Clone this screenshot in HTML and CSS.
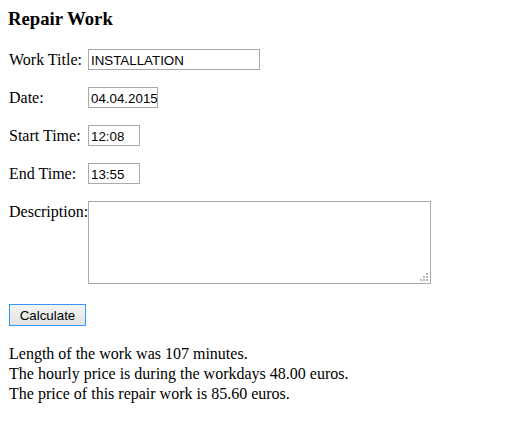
FILE: index.html
```html
<!DOCTYPE html>
<html>
<head>
<meta charset="utf-8">
<title>Repair Work</title>
<link rel="stylesheet" href="styles.css">
</head>
<body>
<h3 class="title">Repair Work</h3>
<form class="form">
  <div class="row">
    <label class="label" for="t">Work Title:</label>
    <input class="field field-title" id="t" type="text" value="INSTALLATION">
  </div>
  <div class="row">
    <label class="label" for="d">Date:</label>
    <input class="field field-date" id="d" type="text" value="04.04.2015">
  </div>
  <div class="row">
    <label class="label" for="s">Start Time:</label>
    <input class="field field-time" id="s" type="text" value="12:08">
  </div>
  <div class="row">
    <label class="label" for="e">End Time:</label>
    <input class="field field-time" id="e" type="text" value="13:55">
  </div>
  <div class="row row-desc">
    <label class="label" for="desc">Description:</label>
    <div class="area-wrap">
      <textarea class="area" id="desc"></textarea>
      <span class="grip"></span>
    </div>
  </div>
  <div class="actions">
    <button class="btn" type="button">Calculate</button>
  </div>
</form>
<div class="result">
  <div>Length of the work was 107 minutes.</div>
  <div>The hourly price is during the workdays 48.00 euros.</div>
  <div>The price of this repair work is 85.60 euros.</div>
</div>
</body>
</html>
```

FILE: styles.css
```css
html, body {
  margin: 0;
  padding: 0;
  background: #fff;
}
body {
  padding: 8px;
  font-family: "Liberation Serif", "Times New Roman", serif;
  font-size: 16px;
  color: #000;
}
.title {
  margin: 0;
  font-size: 18.72px;
  font-weight: bold;
  line-height: 22px;
}
.form {
  display: grid;
  grid-template-columns: 80px 1fr;
  row-gap: 17px;
  margin-top: 19px;
}
.row {
  display: contents;
}
.label {
  padding-left: 1px;
  align-self: center;
  line-height: 18px;
  white-space: nowrap;
}
.row-desc .label {
  align-self: start;
  padding-top: 2px;
}
.field {
  box-sizing: border-box;
  height: 21px;
  border: 1px solid #a9a9a9;
  padding: 2px 1px 1px 2px;
  margin: 0;
  font-family: "Liberation Sans", Arial, sans-serif;
  font-size: 13.33px;
  color: #000;
  background: #fff;
  justify-self: start;
  outline: none;
}
.field-title { width: 172px; }
.field-date { width: 70px; padding-right: 0; }
.field-time { width: 52px; }
.area-wrap {
  position: relative;
  width: 343px;
  height: 83px;
  justify-self: start;
}
.area {
  box-sizing: border-box;
  display: block;
  width: 343px;
  height: 83px;
  margin: 0;
  border: 1px solid #a9a9a9;
  padding: 2px;
  resize: none;
  outline: none;
  font-family: "Liberation Sans", Arial, sans-serif;
  font-size: 13.33px;
}
.grip {
  position: absolute;
  right: 3px;
  bottom: 3px;
  width: 2px;
  height: 2px;
  background: #b8b8b8;
  box-shadow: -3px 0 0 #b8b8b8, -6px 0 0 #b8b8b8, 0 -3px 0 #b8b8b8, -3px -3px 0 #b8b8b8, 0 -6px 0 #b8b8b8;
}
.actions {
  grid-column: 1 / 3;
  margin-top: 3px;
  padding-left: 1px;
}
.btn {
  box-sizing: border-box;
  width: 77px;
  height: 22px;
  margin: 0;
  padding: 0;
  border: 1px solid #3399ff;
  background: linear-gradient(#f4f4f4, #e3e3e3);
  font-family: "Liberation Sans", Arial, sans-serif;
  font-size: 13.33px;
  color: #000;
}
.result {
  margin-top: 18px;
  padding-left: 1px;
  line-height: 20px;
}
```
